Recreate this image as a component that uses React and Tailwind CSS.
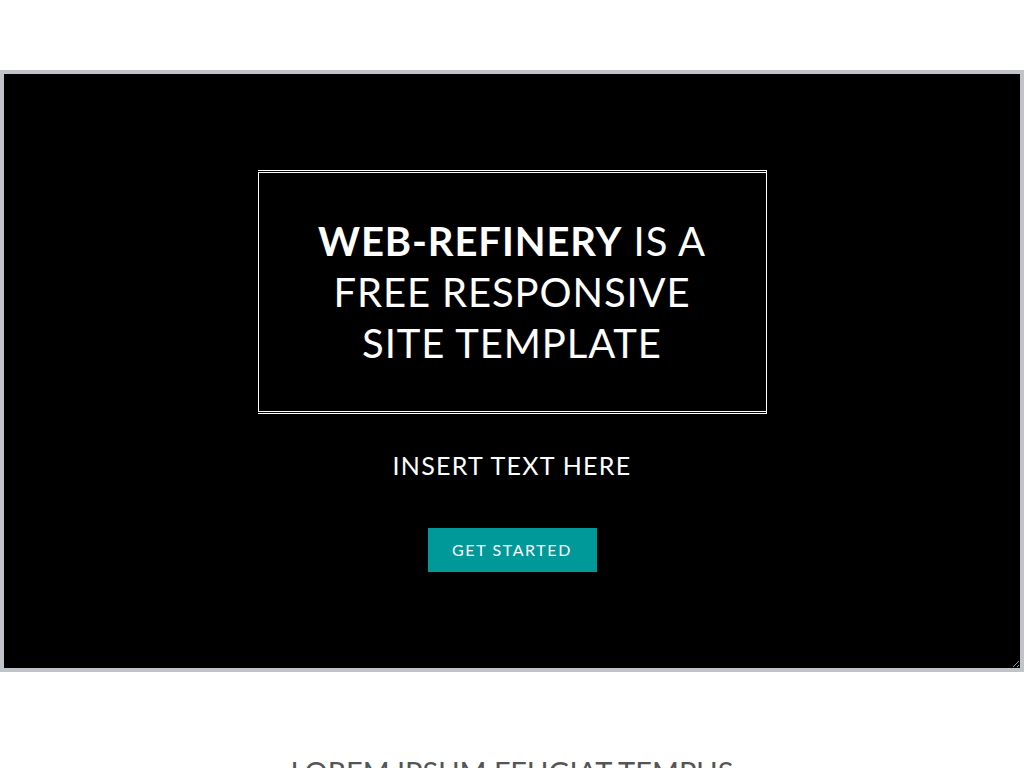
export default function App() {
    return (
        <div className="min-h-screen bg-white font-['Lato',sans-serif]">
            <div className="h-[70px]"></div>

            {/* Banner */}
            <section className="h-[602px] resize overflow-hidden border-4 border-[#c0c4c8] bg-black flex flex-col items-center pt-[96px]">
                <div className="w-[509px] h-[244px] border-x border-y-[3px] border-double border-white flex items-center justify-center">
                    <h2 className="text-white text-[40px] leading-[51px] text-center uppercase tracking-[0.9px]">
                        <strong className="font-bold">Web-Refinery</strong> is a
                        <br />
                        free responsive
                        <br />
                        site template
                    </h2>
                </div>
                <p className="mt-[35px] text-white text-[25px] leading-[32px] uppercase tracking-[1.3px]">
                    Insert text here
                </p>
                <a
                    href="#"
                    className="mt-[47px] w-[169px] h-[44px] flex items-center justify-center bg-[#009999] text-white text-[16px] uppercase tracking-[1.6px]"
                >
                    Get started
                </a>
            </section>

            {/* Next section */}
            <section className="pt-[78px] pb-16 text-center">
                <h2 className="text-[#555555] text-[29px] uppercase">
                    Lorem ipsum feugiat tempus
                </h2>
            </section>
        </div>
    );
}
